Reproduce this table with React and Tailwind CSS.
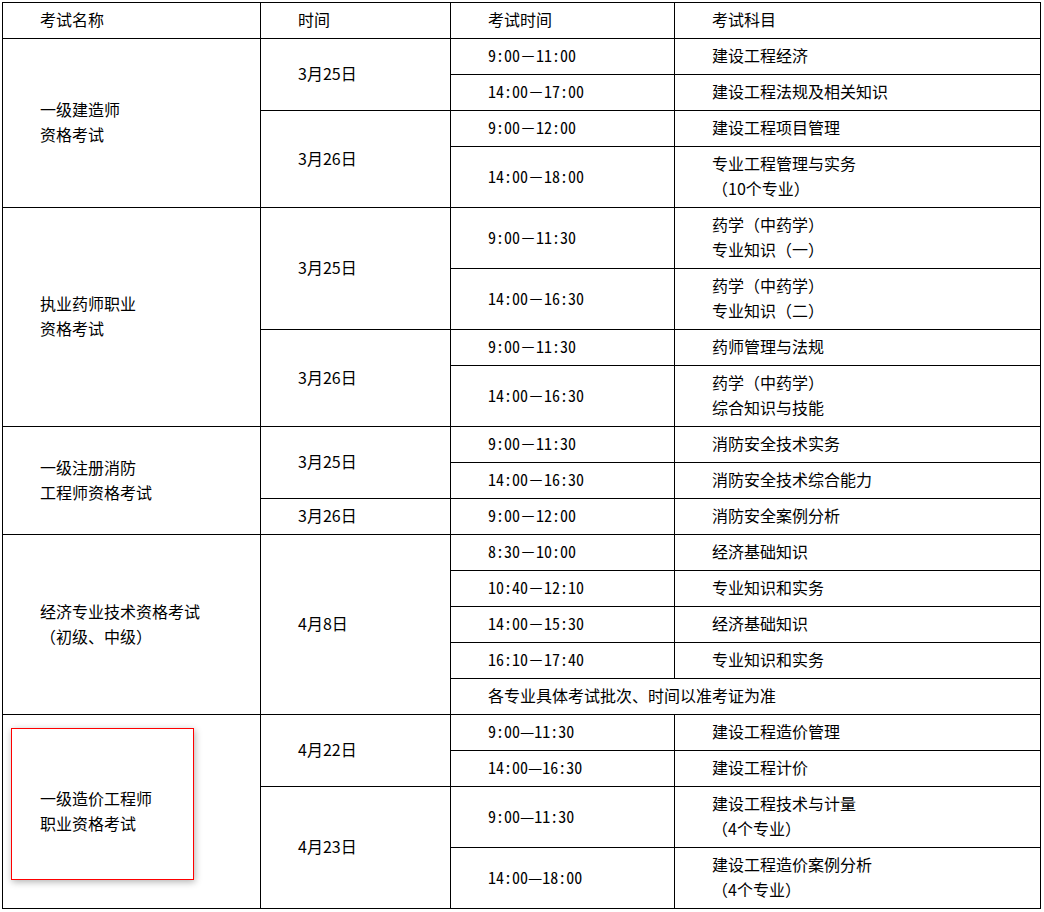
import React from 'react';

const cjk = '"Noto Sans CJK SC", "Noto Sans", sans-serif';

function Cell({ children, rowSpan, colSpan, time }) {
  return (
    <td
      rowSpan={rowSpan}
      colSpan={colSpan}
      className={`border border-black align-middle pl-[37px] pr-2 pt-0 pb-[2px] text-[16px] leading-[25px] text-black ${time ? 'font-[Noto_Sans_Mono_CJK_SC,Noto_Sans_CJK_SC,monospace]' : ''}`}
    >
      {children}
    </td>
  );
}

function Lines({ text }) {
  return text.split('/').map((t, i) => <div key={i}>{t}</div>);
}

export default function App() {
  return (
    <div className="bg-white w-[1044px] h-[912px] pt-[2px] pl-[2px]" style={{ fontFamily: cjk }}>
      <div className="relative w-[1038px]">
        <table className="border-collapse table-fixed w-[1038px]">
          <colgroup>
            <col className="w-[258px]" />
            <col className="w-[190px]" />
            <col className="w-[224px]" />
            <col className="w-[366px]" />
          </colgroup>
          <tbody>
            <tr className="h-[36px]">
              <Cell>考试名称</Cell>
              <Cell>时间</Cell>
              <Cell>考试时间</Cell>
              <Cell>考试科目</Cell>
            </tr>

            {/* 一级建造师 */}
            <tr className="h-[36px]">
              <Cell rowSpan={4}><Lines text="一级建造师/资格考试" /></Cell>
              <Cell rowSpan={2}>3月25日</Cell>
              <Cell time>9:00－11:00</Cell>
              <Cell>建设工程经济</Cell>
            </tr>
            <tr className="h-[36px]">
              <Cell time>14:00－17:00</Cell>
              <Cell>建设工程法规及相关知识</Cell>
            </tr>
            <tr className="h-[36px]">
              <Cell rowSpan={2}>3月26日</Cell>
              <Cell time>9:00－12:00</Cell>
              <Cell>建设工程项目管理</Cell>
            </tr>
            <tr className="h-[61px]">
              <Cell time>14:00－18:00</Cell>
              <Cell><Lines text="专业工程管理与实务/（10个专业）" /></Cell>
            </tr>

            {/* 执业药师 */}
            <tr className="h-[61px]">
              <Cell rowSpan={4}><Lines text="执业药师职业/资格考试" /></Cell>
              <Cell rowSpan={2}>3月25日</Cell>
              <Cell time>9:00－11:30</Cell>
              <Cell><Lines text="药学（中药学）/专业知识（一）" /></Cell>
            </tr>
            <tr className="h-[61px]">
              <Cell time>14:00－16:30</Cell>
              <Cell><Lines text="药学（中药学）/专业知识（二）" /></Cell>
            </tr>
            <tr className="h-[36px]">
              <Cell rowSpan={2}>3月26日</Cell>
              <Cell time>9:00－11:30</Cell>
              <Cell>药师管理与法规</Cell>
            </tr>
            <tr className="h-[61px]">
              <Cell time>14:00－16:30</Cell>
              <Cell><Lines text="药学（中药学）/综合知识与技能" /></Cell>
            </tr>

            {/* 消防 */}
            <tr className="h-[36px]">
              <Cell rowSpan={3}><Lines text="一级注册消防/工程师资格考试" /></Cell>
              <Cell rowSpan={2}>3月25日</Cell>
              <Cell time>9:00－11:30</Cell>
              <Cell>消防安全技术实务</Cell>
            </tr>
            <tr className="h-[36px]">
              <Cell time>14:00－16:30</Cell>
              <Cell>消防安全技术综合能力</Cell>
            </tr>
            <tr className="h-[36px]">
              <Cell>3月26日</Cell>
              <Cell time>9:00－12:00</Cell>
              <Cell>消防安全案例分析</Cell>
            </tr>

            {/* 经济专业 */}
            <tr className="h-[36px]">
              <Cell rowSpan={5}><Lines text="经济专业技术资格考试/（初级、中级）" /></Cell>
              <Cell rowSpan={5}>4月8日</Cell>
              <Cell time>8:30－10:00</Cell>
              <Cell>经济基础知识</Cell>
            </tr>
            <tr className="h-[36px]">
              <Cell time>10:40－12:10</Cell>
              <Cell>专业知识和实务</Cell>
            </tr>
            <tr className="h-[36px]">
              <Cell time>14:00－15:30</Cell>
              <Cell>经济基础知识</Cell>
            </tr>
            <tr className="h-[36px]">
              <Cell time>16:10－17:40</Cell>
              <Cell>专业知识和实务</Cell>
            </tr>
            <tr className="h-[36px]">
              <Cell colSpan={2}>各专业具体考试批次、时间以准考证为准</Cell>
            </tr>

            {/* 造价工程师 */}
            <tr className="h-[36px]">
              <Cell rowSpan={4}><Lines text="一级造价工程师/职业资格考试" /></Cell>
              <Cell rowSpan={2}>4月22日</Cell>
              <Cell time>9:00—11:30</Cell>
              <Cell>建设工程造价管理</Cell>
            </tr>
            <tr className="h-[36px]">
              <Cell time>14:00—16:30</Cell>
              <Cell>建设工程计价</Cell>
            </tr>
            <tr className="h-[61px]">
              <Cell rowSpan={2}>4月23日</Cell>
              <Cell time>9:00—11:30</Cell>
              <Cell><Lines text="建设工程技术与计量/（4个专业）" /></Cell>
            </tr>
            <tr className="h-[61px]">
              <Cell time>14:00—18:00</Cell>
              <Cell><Lines text="建设工程造价案例分析/（4个专业）" /></Cell>
            </tr>
          </tbody>
        </table>

        {/* selection box drawn over the last name cell */}
        <div className="absolute left-[9px] top-[726px] w-[183px] h-[152px] border border-[#ff0000] shadow-[1px_2px_7px_rgba(0,0,0,0.3)] pointer-events-none" />
      </div>
    </div>
  );
}
